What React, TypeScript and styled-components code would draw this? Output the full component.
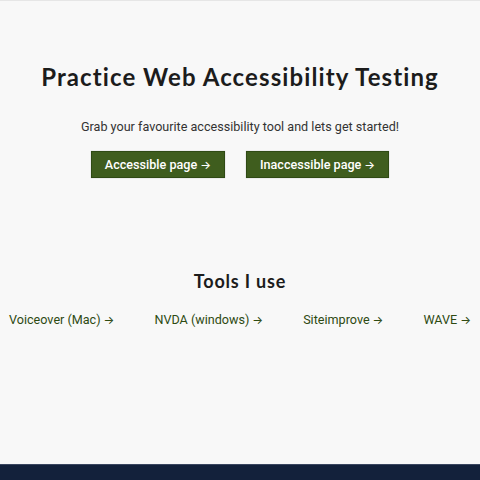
import React from "react";
import styled, { createGlobalStyle } from "styled-components";

const Global = createGlobalStyle`
  html, body { margin: 0; padding: 0; background: #f8f8f8; }
  body { font-family: Roboto, "Noto Sans", sans-serif; }
`;

const Page = styled.div`
  width: 480px;
  height: 480px;
  display: flex;
  flex-direction: column;
  border-top: 1px solid #e6e6e6;
  box-sizing: border-box;
  overflow: hidden;
`;

const Main = styled.main`
  flex: 1;
  display: flex;
  flex-direction: column;
  align-items: center;
`;

const Hero = styled.section`
  display: flex;
  flex-direction: column;
  align-items: center;
  padding-top: 60px;
`;

const Title = styled.h1`
  margin: 0;
  font-family: Lato, sans-serif;
  font-weight: 700;
  font-size: 24px;
  letter-spacing: 1.1px;
  color: #1c1c1c;
  line-height: 32px;
`;

const Lead = styled.p`
  margin: 26px 0 0;
  font-size: 12.6px;
  color: #333;
  line-height: 16px;
`;

const Buttons = styled.div`
  display: flex;
  gap: 21px;
  margin-top: 16px;
`;

const Button = styled.a`
  display: inline-flex;
  align-items: center;
  height: 27px;
  padding: 0 13px;
  background: #3f5d1e;
  border: 1px solid #2f4a14;
  box-shadow: 0 0 1px rgba(0,0,0,0.3);
  color: #fff;
  font-weight: 500;
  font-size: 12.6px;
  text-decoration: none;
  box-sizing: border-box;
`;

const Arrow = styled.span`
  font-family: Inter, sans-serif;
  font-size: 0.9em;
  margin-left: 3px;
`;

const Tools = styled.section`
  display: flex;
  flex-direction: column;
  align-items: center;
  margin-top: 91px;
`;

const SubTitle = styled.h2`
  margin: 0;
  font-family: Lato, sans-serif;
  font-weight: 700;
  font-size: 18px;
  letter-spacing: 0.8px;
  color: #1c1c1c;
  line-height: 24px;
`;

const LinkRow = styled.div`
  display: flex;
  gap: 40px;
  margin-top: 19px;
  white-space: nowrap;
`;

const ToolLink = styled.a`
  font-size: 12.6px;
  color: #2e4a12;
  text-decoration: none;
  line-height: 16px;
`;

const Footer = styled.footer`
  height: 15px;
  background: #13213b;
  border-top: 1px solid #3a4660;
`;

const tools = ["Voiceover (Mac)", "NVDA (windows)", "Siteimprove", "WAVE"];

export default function App() {
  return (
    <>
      <Global />
      <Page>
        <Main>
          <Hero>
            <Title>Practice Web Accessibility Testing</Title>
            <Lead>Grab your favourite accessibility tool and lets get started!</Lead>
            <Buttons>
              <Button href="#">Accessible page<Arrow>→</Arrow></Button>
              <Button href="#">Inaccessible page<Arrow>→</Arrow></Button>
            </Buttons>
          </Hero>
          <Tools>
            <SubTitle>Tools I use</SubTitle>
            <LinkRow>
              {tools.map((t) => (
                <ToolLink key={t} href="#">{t}<Arrow>→</Arrow></ToolLink>
              ))}
            </LinkRow>
          </Tools>
        </Main>
        <Footer />
      </Page>
    </>
  );
}
